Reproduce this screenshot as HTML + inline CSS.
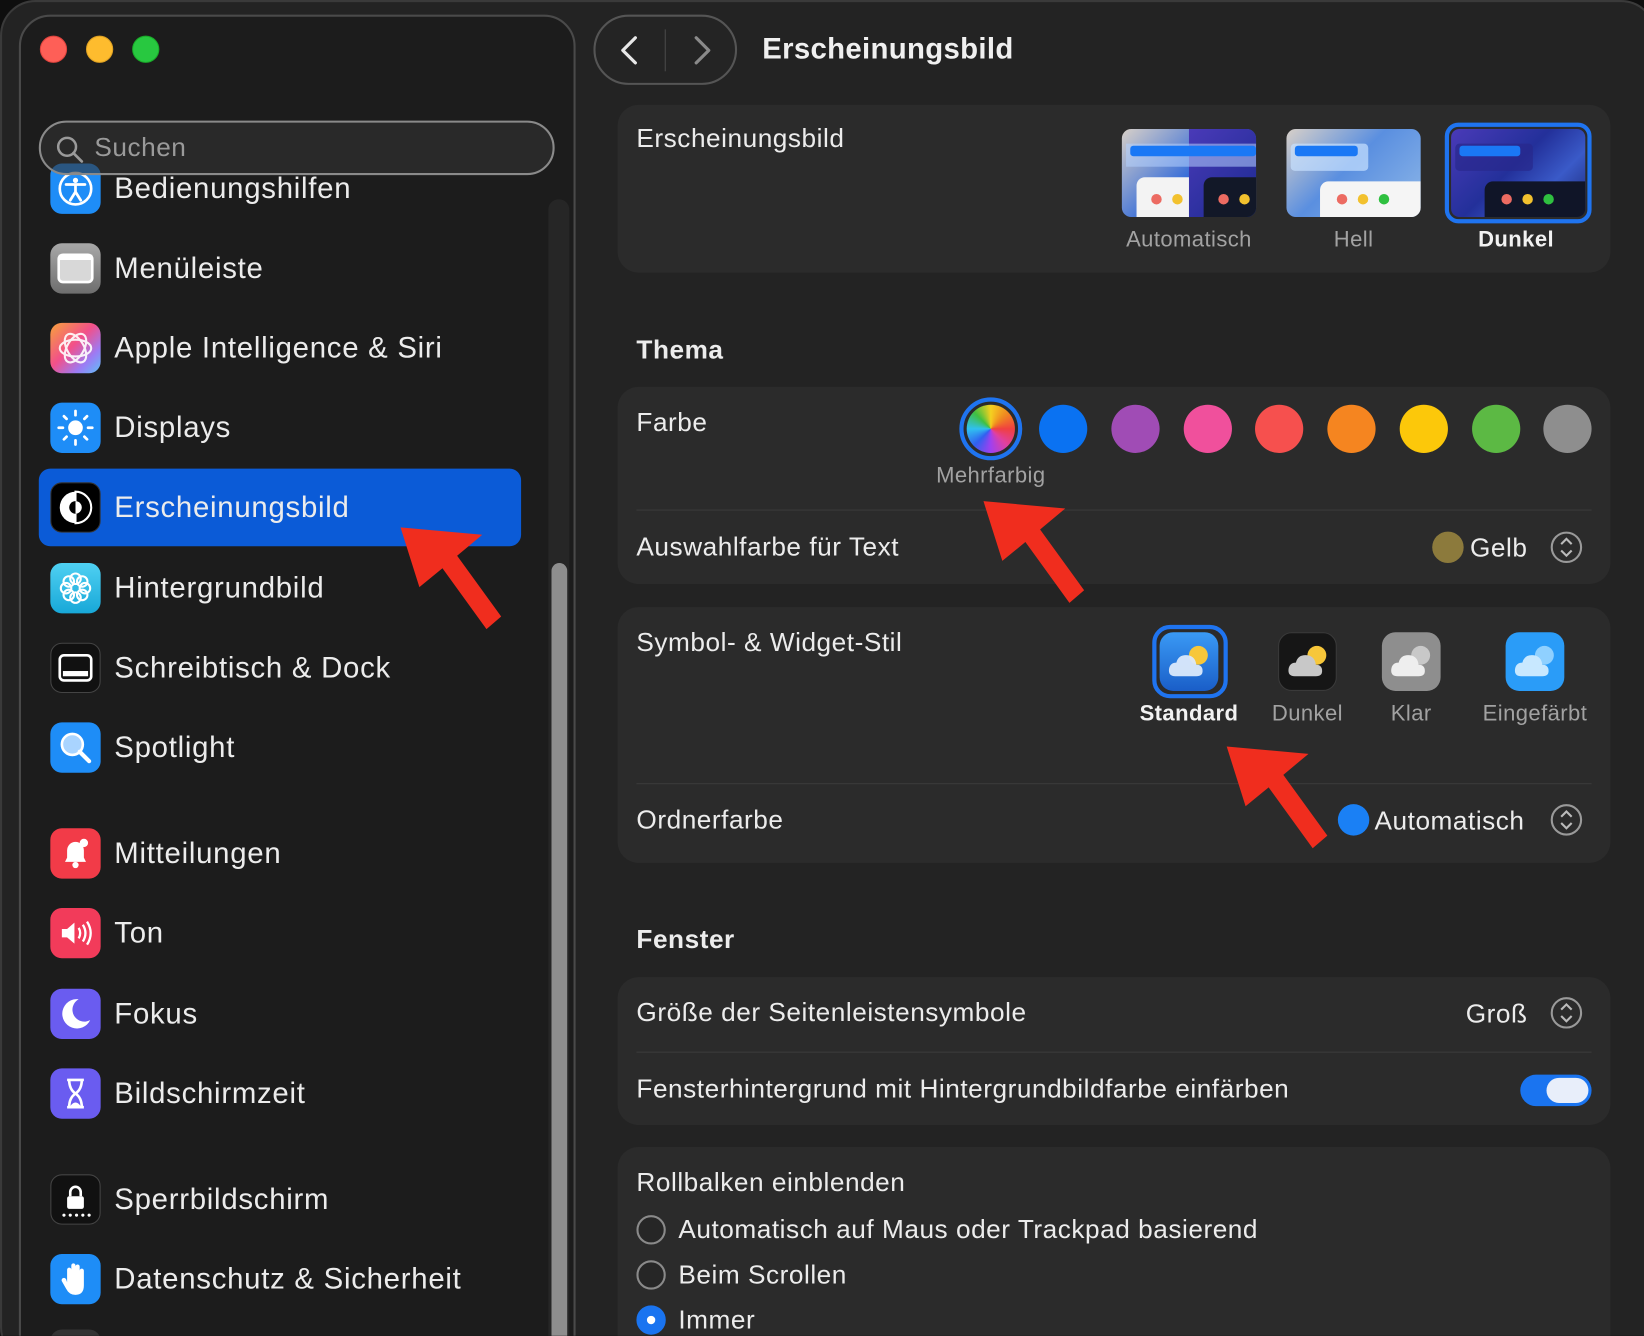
<!DOCTYPE html>
<html><head><meta charset="utf-8">
<style>
html,body{margin:0;padding:0;background:#0e0e0e;overflow:hidden;width:1644px;height:1336px}
#w{position:absolute;left:0;top:0;width:1568px;height:1274px;transform:scale(1.04847);transform-origin:0 0;font-family:"Liberation Sans",sans-serif;color:#ececec;overflow:hidden}
.abs{position:absolute}
#win{left:0;top:0;width:1580px;height:1300px;background:#232323;border-radius:34px;border:2px solid #3a3a3a;box-sizing:border-box}
#side{left:18px;top:14px;width:531px;height:1290px;background:#1c1c1c;border-radius:30px;border:2px solid #4a4a4a;box-sizing:border-box}
.tl{width:26px;height:26px;border-radius:50%;top:34px}
#search{left:37px;top:115px;width:492px;height:52px;border:2px solid #8a8a8a;border-radius:26px;box-sizing:border-box;background:rgba(50,50,50,.6);z-index:3}
.item{left:48px;width:460px;height:50px;font-size:28px;line-height:50px;letter-spacing:0.7px}
.ic{position:absolute;left:0;top:1px;width:48px;height:48px;border-radius:11px}
.item span{position:absolute;left:61px;top:0}
.card{background:#2b2b2b;border-radius:20px;left:589px;width:947px}
.lbl{font-size:25px;line-height:30px;letter-spacing:0.5px}
.sub{font-size:21px;color:#a2a2a2;text-align:center;width:160px;letter-spacing:0.4px}
.dot{width:46px;height:46px;border-radius:50%;top:386px}
.div{height:1px;background:#3c3c3c;left:607px;width:911px}
.step{width:30px;height:30px;border-radius:50%;border:2px solid #9a9a9a;box-sizing:border-box}
.thumb{width:128px;height:84px;border-radius:9px;overflow:hidden;top:123px}
.wic{width:56px;height:56px;border-radius:13px;top:603px}
.radio{width:28px;height:28px;border-radius:50%;border:2px solid #8a8a8a;box-sizing:border-box;left:607px;background:#262626}
</style></head><body><div id="w">
<div id="win" class="abs"></div>
<div id="side" class="abs"></div>
<div class="abs tl" style="left:38px;background:#fe5f57;border:1px solid #e0443e;box-sizing:border-box"></div>
<div class="abs tl" style="left:82px;background:#febc2e;border:1px solid #dea123;box-sizing:border-box"></div>
<div class="abs tl" style="left:126px;background:#28c840;border:1px solid #1aab29;box-sizing:border-box"></div>
<div id="search" class="abs">
<svg class="abs" style="left:14px;top:12px" width="28" height="28" viewBox="0 0 28 28"><circle cx="11" cy="11" r="8.5" fill="none" stroke="#9a9a9a" stroke-width="2.4"/><line x1="17" y1="17" x2="25" y2="25" stroke="#9a9a9a" stroke-width="2.6" stroke-linecap="round"/></svg>
<div class="abs" style="left:51px;top:10px;font-size:25px;color:#9a9a9a;letter-spacing:0.5px">Suchen</div></div>
<div class="abs" style="left:523px;top:190px;width:20px;height:1100px;background:#262626;border-radius:10px"></div>
<div class="abs" style="left:526px;top:537px;width:15px;height:760px;background:#8e8e8e;border-radius:8px"></div>
<div class="abs" style="left:37px;top:447px;width:460px;height:74px;background:#0b5bd7;border-radius:11px"></div>

<div class="abs item" style="top:155px;z-index:2"><div class="ic" style="background:#1e8df7"><svg width="48" height="48"><circle cx="24" cy="24" r="15" fill="none" stroke="#fff" stroke-width="2.5"/><circle cx="24" cy="16" r="2.5" fill="#fff"/><path d="M15 20 L33 20 M24 20 L24 27 L19 35 M24 27 L29 35" stroke="#fff" stroke-width="2.6" fill="none" stroke-linecap="round"/></svg></div><span>Bedienungshilfen</span></div>
<div class="abs item" style="top:231px"><div class="ic" style="background:linear-gradient(#a8a8a8,#6e6e6e)"><svg width="48" height="48"><rect x="8" y="11" width="32" height="26" rx="4" fill="#d8d8d8" stroke="#fff" stroke-width="2.5"/><rect x="8" y="11" width="32" height="5" fill="#fff"/></svg></div><span>Menüleiste</span></div>
<div class="abs item" style="top:307px"><div class="ic" style="background:linear-gradient(135deg,#f7a23b,#f2508a 45%,#9b7cf5 75%,#5fc0f7)"><svg width="48" height="48"><g fill="none" stroke="#fff" stroke-width="2" opacity=".9"><ellipse cx="24" cy="24" rx="15" ry="8"/><ellipse cx="24" cy="24" rx="15" ry="8" transform="rotate(60 24 24)"/><ellipse cx="24" cy="24" rx="15" ry="8" transform="rotate(120 24 24)"/></g></svg></div><span>Apple Intelligence &amp; Siri</span></div>
<div class="abs item" style="top:383px"><div class="ic" style="background:#1e8df7"><svg width="48" height="48"><circle cx="24" cy="24" r="7" fill="#fff"/><g stroke="#fff" stroke-width="2.6" stroke-linecap="round"><line x1="24" y1="8" x2="24" y2="12"/><line x1="24" y1="36" x2="24" y2="40"/><line x1="8" y1="24" x2="12" y2="24"/><line x1="36" y1="24" x2="40" y2="24"/><line x1="13" y1="13" x2="15.5" y2="15.5"/><line x1="35" y1="35" x2="32.5" y2="32.5"/><line x1="35" y1="13" x2="32.5" y2="15.5"/><line x1="13" y1="35" x2="15.5" y2="32.5"/></g></svg></div><span>Displays</span></div>
<div class="abs item" style="top:459px"><div class="ic" style="background:#000;border:1px solid #333;box-sizing:border-box"><svg width="46" height="46"><circle cx="23" cy="23" r="15" fill="#fff"/><path d="M23 8 A15 15 0 0 1 23 38 Z" fill="#000" stroke="#fff" stroke-width="2"/><circle cx="23" cy="23" r="6" fill="#000"/><path d="M23 17 A6 6 0 0 1 23 29 Z" fill="#fff"/></svg></div><span>Erscheinungsbild</span></div>
<div class="abs item" style="top:536px"><div class="ic" style="background:linear-gradient(#4fd0f2,#18a8d8)"><svg width="48" height="48"><g fill="none" stroke="#fff" stroke-width="2"><circle cx="24" cy="15" r="5"/><circle cx="24" cy="33" r="5"/><circle cx="15" cy="24" r="5"/><circle cx="33" cy="24" r="5"/><circle cx="17.6" cy="17.6" r="5"/><circle cx="30.4" cy="30.4" r="5"/><circle cx="30.4" cy="17.6" r="5"/><circle cx="17.6" cy="30.4" r="5"/></g></svg></div><span>Hintergrundbild</span></div>
<div class="abs item" style="top:612px"><div class="ic" style="background:#111;border:1px solid #444;box-sizing:border-box"><svg width="46" height="46"><rect x="8" y="11" width="30" height="24" rx="4" fill="none" stroke="#fff" stroke-width="2.5"/><rect x="11" y="26" width="24" height="5" fill="#fff"/></svg></div><span>Schreibtisch &amp; Dock</span></div>
<div class="abs item" style="top:688px"><div class="ic" style="background:#1e8df7"><svg width="48" height="48"><circle cx="21" cy="21" r="10" fill="#a9d4ff" stroke="#fff" stroke-width="2.5"/><line x1="28" y1="28" x2="37" y2="37" stroke="#fff" stroke-width="4" stroke-linecap="round"/></svg></div><span>Spotlight</span></div>
<div class="abs item" style="top:789px"><div class="ic" style="background:#f23b48"><svg width="48" height="48"><path d="M14 32 L16 28 L16 21 A8 8 0 0 1 32 21 L32 28 L34 32 Z" fill="#fff"/><circle cx="24" cy="35" r="3" fill="#fff"/><circle cx="32" cy="14" r="4" fill="#fff"/></svg></div><span>Mitteilungen</span></div>
<div class="abs item" style="top:865px"><div class="ic" style="background:#f23b5a"><svg width="48" height="48"><path d="M11 20 H16 L23 14 V34 L16 28 H11 Z" fill="#fff"/><path d="M27 19 Q30 24 27 29 M31 16 Q36 24 31 32 M35 13 Q42 24 35 35" stroke="#fff" stroke-width="2.2" fill="none"/></svg></div><span>Ton</span></div>
<div class="abs item" style="top:942px"><div class="ic" style="background:#6a5cf0"><svg width="48" height="48"><path d="M27 10 A14 14 0 1 0 38 30 A11 11 0 0 1 27 10 Z" fill="#fff"/></svg></div><span>Fokus</span></div>
<div class="abs item" style="top:1018px"><div class="ic" style="background:#6a5cf0"><svg width="48" height="48"><path d="M16 11 H32 M16 37 H32 M18 11 Q18 20 24 24 Q30 20 30 11 M18 37 Q18 28 24 24 Q30 28 30 37" stroke="#fff" stroke-width="2.5" fill="none"/><path d="M19 36 Q24 29 29 36 Z" fill="#fff"/></svg></div><span>Bildschirmzeit</span></div>
<div class="abs item" style="top:1119px"><div class="ic" style="background:#111;border:1px solid #444;box-sizing:border-box"><svg width="46" height="46"><path d="M18 20 V16 A5 5 0 0 1 28 16 V20" stroke="#fff" stroke-width="2.5" fill="none"/><rect x="15" y="20" width="16" height="12" rx="2" fill="#fff"/><g fill="#fff"><circle cx="12" cy="38" r="1.5"/><circle cx="18" cy="38" r="1.5"/><circle cx="24" cy="38" r="1.5"/><circle cx="30" cy="38" r="1.5"/><circle cx="36" cy="38" r="1.5"/></g></svg></div><span>Sperrbildschirm</span></div>
<div class="abs item" style="top:1195px"><div class="ic" style="background:#1e8df7"><svg width="48" height="48"><path d="M16 27 V15 A2 2 0 0 1 20 15 V24 V11 A2 2 0 0 1 24 11 V23 V12 A2 2 0 0 1 28 12 V24 V16 A2 2 0 0 1 32 16 V30 Q32 39 24 39 Q18 39 15 33 L11 26 A2 2 0 0 1 15 24 Z" fill="#fff"/></svg></div><span>Datenschutz &amp; Sicherheit</span></div>
<div class="abs ic" style="left:48px;top:1268px;background:#333"></div>

<div class="abs" style="left:566px;top:14px;width:137px;height:67px;border:2px solid #555;border-radius:34px;box-sizing:border-box;background:#242424"></div>
<div class="abs" style="left:634px;top:28px;width:1px;height:40px;background:#4a4a4a"></div>
<svg class="abs" style="left:588px;top:32px" width="26" height="32"><path d="M18 4 L6 16 L18 28" stroke="#e8e8e8" stroke-width="3" fill="none" stroke-linecap="round" stroke-linejoin="round"/></svg>
<svg class="abs" style="left:656px;top:32px" width="26" height="32"><path d="M8 4 L20 16 L8 28" stroke="#8a8a8a" stroke-width="3" fill="none" stroke-linecap="round" stroke-linejoin="round"/></svg>
<div class="abs" style="left:727px;top:31px;font-size:28px;font-weight:bold;color:#f0f0f0;letter-spacing:0.3px">Erscheinungsbild</div>

<div class="abs card" style="top:100px;height:160px"></div>
<div class="abs lbl" style="left:607px;top:117px">Erscheinungsbild</div>
<div class="abs thumb" style="left:1070px;background:linear-gradient(135deg,#d8d0c8,#3a6fd8 50%,#1a3aa8)">
 <div class="abs" style="left:64px;top:0;width:64px;height:84px;background:linear-gradient(135deg,#4a3ab8,#1a2a90)"></div>
 <div class="abs" style="left:4px;top:14px;width:124px;height:22px;background:rgba(180,210,255,.55)"></div>
 <div class="abs" style="left:8px;top:16px;width:120px;height:10px;background:#1a78f5;border-radius:3px"></div>
 <div class="abs" style="left:14px;top:46px;width:50px;height:40px;background:#f3f3f3;border-radius:8px 0 0 0"></div>
 <div class="abs" style="left:78px;top:46px;width:50px;height:40px;background:#121828;border-radius:8px 0 0 0"></div>
 <div class="abs" style="left:28px;top:62px;width:10px;height:10px;border-radius:50%;background:#ec6b62"></div><div class="abs" style="left:48px;top:62px;width:10px;height:10px;border-radius:50%;background:#f2c12e"></div>
 <div class="abs" style="left:92px;top:62px;width:10px;height:10px;border-radius:50%;background:#ec6b62"></div><div class="abs" style="left:112px;top:62px;width:10px;height:10px;border-radius:50%;background:#f2c12e"></div>
</div>
<div class="abs thumb" style="left:1227px;background:linear-gradient(135deg,#d8d0c8,#5a8fe0 45%,#8fb8e8)">
 <div class="abs" style="left:4px;top:14px;width:74px;height:26px;background:rgba(200,225,255,.7);border-radius:4px"></div>
 <div class="abs" style="left:8px;top:16px;width:60px;height:10px;background:#1a78f5;border-radius:3px"></div>
 <div class="abs" style="left:32px;top:50px;width:96px;height:36px;background:#f5f5f5;border-radius:8px 0 0 0"></div>
 <div class="abs" style="left:48px;top:62px;width:10px;height:10px;border-radius:50%;background:#ec6b62"></div><div class="abs" style="left:68px;top:62px;width:10px;height:10px;border-radius:50%;background:#f2c12e"></div><div class="abs" style="left:88px;top:62px;width:10px;height:10px;border-radius:50%;background:#2fc040"></div>
</div>
<div class="abs" style="left:1378px;top:117px;width:140px;height:96px;border:4px solid #1f74f0;border-radius:13px;box-sizing:border-box"></div>
<div class="abs thumb" style="left:1384px;top:123px;width:128px;height:84px;border-radius:8px;background:linear-gradient(135deg,#4a3ab8,#23309a 45%,#3a5ac8 70%,#1a2470)">
 <div class="abs" style="left:4px;top:14px;width:74px;height:26px;background:rgba(40,40,140,.7);border-radius:4px"></div>
 <div class="abs" style="left:8px;top:16px;width:58px;height:10px;background:#1a78f5;border-radius:3px"></div>
 <div class="abs" style="left:32px;top:50px;width:96px;height:36px;background:#101528;border-radius:8px 0 0 0"></div>
 <div class="abs" style="left:48px;top:62px;width:10px;height:10px;border-radius:50%;background:#ec6b62"></div><div class="abs" style="left:68px;top:62px;width:10px;height:10px;border-radius:50%;background:#f2c12e"></div><div class="abs" style="left:88px;top:62px;width:10px;height:10px;border-radius:50%;background:#2fc040"></div>
</div>
<div class="abs sub" style="left:1054px;top:217px">Automatisch</div>
<div class="abs sub" style="left:1211px;top:217px">Hell</div>
<div class="abs sub" style="left:1366px;top:217px;color:#f2f2f2;font-weight:bold">Dunkel</div>

<div class="abs lbl" style="left:607px;top:319px;font-weight:bold">Thema</div>
<div class="abs card" style="top:369px;height:188px"></div>
<div class="abs lbl" style="left:607px;top:388px">Farbe</div>
<div class="abs" style="left:915px;top:379px;width:60px;height:60px;border-radius:50%;border:4px solid #1f74f0;box-sizing:border-box"></div>
<div class="abs dot" style="left:922px;background:conic-gradient(#f5d020,#f08a20,#f04040,#e040a0,#a040f0,#3060f0,#30c0f0,#40c040,#f5d020)"></div>
<div class="abs dot" style="left:991px;background:#0a72f2"></div>
<div class="abs dot" style="left:1060px;background:#a04cb5"></div>
<div class="abs dot" style="left:1129px;background:#f0509c"></div>
<div class="abs dot" style="left:1197px;background:#f6504e"></div>
<div class="abs dot" style="left:1266px;background:#f58520"></div>
<div class="abs dot" style="left:1335px;background:#fcc80a"></div>
<div class="abs dot" style="left:1404px;background:#5cb944"></div>
<div class="abs dot" style="left:1472px;background:#8e8e8e"></div>
<div class="abs sub" style="left:865px;top:442px">Mehrfarbig</div>
<div class="abs div" style="top:486px"></div>
<div class="abs lbl" style="left:607px;top:507px">Auswahlfarbe für Text</div>
<div class="abs" style="left:1366px;top:507px;width:30px;height:30px;border-radius:50%;background:#8c7a3c"></div>
<div class="abs lbl" style="left:1402px;top:508px">Gelb</div>
<div class="abs step" style="left:1479px;top:507px"><svg width="26" height="26"><path d="M8 10 L13 5 L18 10 M8 16 L13 21 L18 16" stroke="#bbb" stroke-width="2" fill="none"/></svg></div>

<div class="abs card" style="top:579px;height:244px"></div>
<div class="abs lbl" style="left:607px;top:598px">Symbol- &amp; Widget-Stil</div>
<div class="abs" style="left:1099px;top:596px;width:72px;height:70px;border:4px solid #1f74f0;border-radius:17px;box-sizing:border-box"></div>
<div class="abs wic" style="left:1106px;top:603px;background:linear-gradient(#3a9af5,#1a5ec8)"><svg width="56" height="56"><circle cx="37" cy="22" r="9" fill="#f7c73a"/><path d="M15 42 Q8 42 9 35 Q10 29 16 29 Q18 21 27 22 Q34 23 35 31 Q41 31 41 37 Q41 42 35 42 Z" fill="#dbe9fb" opacity=".95"/></svg></div>
<div class="abs wic" style="left:1219px;background:#161616;border:1px solid #3a3a3a;box-sizing:border-box"><svg width="54" height="54"><circle cx="36" cy="21" r="9" fill="#f7c73a"/><path d="M15 41 Q8 41 9 34 Q10 28 16 28 Q18 20 27 21 Q34 22 35 30 Q41 30 41 36 Q41 41 35 41 Z" fill="#c8c8c8"/></svg></div>
<div class="abs wic" style="left:1318px;background:#8e8e8e"><svg width="56" height="56"><circle cx="37" cy="22" r="9" fill="#c8c8c8"/><path d="M15 42 Q8 42 9 35 Q10 29 16 29 Q18 21 27 22 Q34 23 35 31 Q41 31 41 37 Q41 42 35 42 Z" fill="#eee"/></svg></div>
<div class="abs wic" style="left:1436px;background:#2a9cf8"><svg width="56" height="56"><circle cx="37" cy="22" r="9" fill="#8fd0ff"/><path d="M15 42 Q8 42 9 35 Q10 29 16 29 Q18 21 27 22 Q34 23 35 31 Q41 31 41 37 Q41 42 35 42 Z" fill="#c8e8ff"/></svg></div>
<div class="abs sub" style="left:1054px;top:669px;color:#f2f2f2;font-weight:bold">Standard</div>
<div class="abs sub" style="left:1167px;top:669px">Dunkel</div>
<div class="abs sub" style="left:1266px;top:669px">Klar</div>
<div class="abs sub" style="left:1384px;top:669px">Eingefärbt</div>
<div class="abs div" style="top:747px"></div>
<div class="abs lbl" style="left:607px;top:767px">Ordnerfarbe</div>
<div class="abs" style="left:1276px;top:767px;width:30px;height:30px;border-radius:50%;background:#1a80f5"></div>
<div class="abs lbl" style="left:1311px;top:768px">Automatisch</div>
<div class="abs step" style="left:1479px;top:767px"><svg width="26" height="26"><path d="M8 10 L13 5 L18 10 M8 16 L13 21 L18 16" stroke="#bbb" stroke-width="2" fill="none"/></svg></div>

<div class="abs lbl" style="left:607px;top:881px;font-weight:bold">Fenster</div>
<div class="abs card" style="top:932px;height:141px"></div>
<div class="abs lbl" style="left:607px;top:951px">Größe der Seitenleistensymbole</div>
<div class="abs lbl" style="left:1398px;top:952px">Groß</div>
<div class="abs step" style="left:1479px;top:951px"><svg width="26" height="26"><path d="M8 10 L13 5 L18 10 M8 16 L13 21 L18 16" stroke="#bbb" stroke-width="2" fill="none"/></svg></div>
<div class="abs div" style="top:1003px"></div>
<div class="abs lbl" style="left:607px;top:1024px">Fensterhintergrund mit Hintergrundbildfarbe einfärben</div>
<div class="abs" style="left:1450px;top:1025px;width:68px;height:30px;border-radius:15px;background:#1a74f0"></div>
<div class="abs" style="left:1475px;top:1028px;width:40px;height:24px;border-radius:12px;background:#e8eefa"></div>

<div class="abs card" style="top:1094px;height:220px"></div>
<div class="abs lbl" style="left:607px;top:1113px">Rollbalken einblenden</div>
<div class="abs radio" style="top:1159px"></div>
<div class="abs lbl" style="left:647px;top:1158px">Automatisch auf Maus oder Trackpad basierend</div>
<div class="abs radio" style="top:1202px"></div>
<div class="abs lbl" style="left:647px;top:1201px">Beim Scrollen</div>
<div class="abs radio" style="top:1245px;background:#1a74f0;border-color:#1a74f0"><div class="abs" style="left:8px;top:8px;width:8px;height:8px;border-radius:50%;background:#fff"></div></div>
<div class="abs lbl" style="left:647px;top:1244px">Immer</div>

<svg class="abs" style="left:0;top:0" width="1568" height="1274">
<g fill="#f02d1e">
<polygon points="382,503 460,510 436,530 478,588 464,600 422,542 400,560"/>
<polygon points="938,478 1016,485 992,505 1034,563 1020,575 978,517 956,535"/>
<polygon points="1170,712 1248,719 1224,739 1266,797 1252,809 1210,751 1188,769"/>
</g></svg>
</div></body></html>
